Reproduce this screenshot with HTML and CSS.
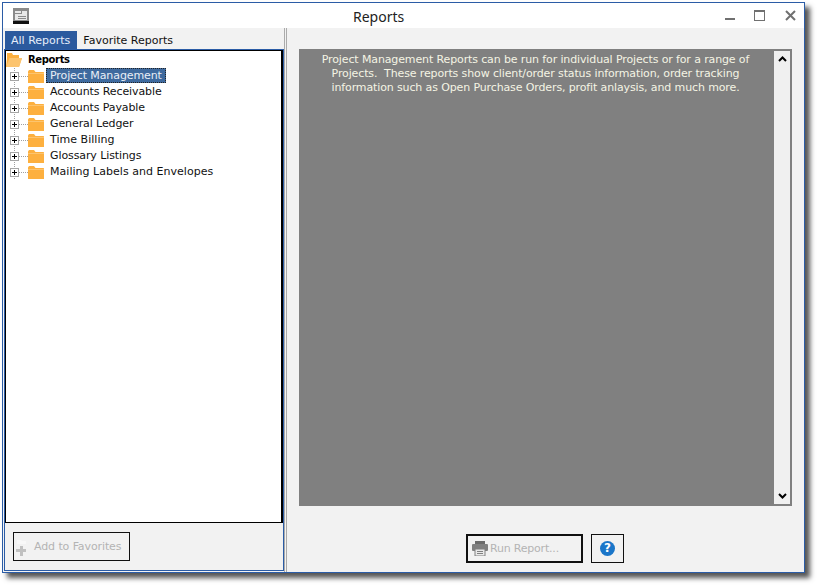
FILE: index.html
```html
<!DOCTYPE html>
<html lang="en">
<head>
<meta charset="utf-8">
<title>Reports</title>
<link rel="stylesheet" href="styles.css">
</head>
<body>
<svg class="defs" width="0" height="0" aria-hidden="true">
  <defs>
    <symbol id="folder" viewBox="0 0 16 14">
      <path d="M0 2.5 1 1h5l1.5 2H15.5l.5.5V14H0z" fill="#fdb03f"/>
      <path d="M0 4h16v1H0z" fill="#fcc46f"/>
    </symbol>
    <symbol id="expander" viewBox="0 0 20 16">
      <path d="M6.5 0v16" stroke="#a0a0a0" stroke-dasharray="1 1" fill="none"/>
      <path d="M11 8.5h9" stroke="#a0a0a0" stroke-dasharray="1 1" fill="none"/>
      <rect x="2.5" y="4.5" width="8" height="8" fill="#fff" stroke="#a6a6a6"/>
      <path d="M4 8.5h5M6.5 6v5" stroke="#000" fill="none"/>
    </symbol>
  </defs>
</svg>
<div class="window">
  <header class="titlebar">
    <svg class="app-icon" width="16" height="16" viewBox="0 0 16 16">
      <rect width="16" height="16" fill="#8a8a8a"/>
      <rect y="13" width="16" height="3" fill="#111"/>
      <rect x="2" y="3" width="12" height="9" fill="#e8e8e8"/>
      <path d="M2 5.500h6M8.500 3v3M5 8.500h8M5 10.500h8" stroke="#8a8a8a" fill="none"/>
    </svg>
    <h1 class="title">Reports</h1>
    <div class="controls">
      <svg class="ctl-min" width="10" height="3" viewBox="0 0 10 3"><rect width="10" height="2" y="1" fill="#707070"/></svg>
      <svg class="ctl-max" width="11" height="11" viewBox="0 0 11 11"><rect x=".5" y=".5" width="10" height="10" fill="none" stroke="#707070"/><rect x="0" y="0" width="11" height="2" fill="#707070"/></svg>
      <svg class="ctl-close" width="11" height="11" viewBox="0 0 11 11"><path d="M1 1l9 9M10 1l-9 9" stroke="#707070" stroke-width="2" fill="none"/></svg>
    </div>
  </header>
  <main class="content">
    <section class="left">
      <nav class="tabs">
        <span class="tab active">All Reports</span>
        <span class="tab">Favorite Reports</span>
      </nav>
      <div class="panel">
        <div class="tree">
          <div class="root">
            <svg class="root-folder" width="16" height="14" viewBox="0 0 16 14"><path d="M1 0h5l1 2h6v3h3l-3 9H0L1 5z" fill="#fdb03f"/><path d="M3.500 5H16l-3 9H0z" fill="#fcc46f"/></svg>
            <span class="root-label">Reports</span>
          </div>
          <div class="row"><svg class="exp"><use href="#expander"/></svg><svg class="fld"><use href="#folder"/></svg><span class="label selected">Project Management</span></div>
          <div class="row"><svg class="exp"><use href="#expander"/></svg><svg class="fld"><use href="#folder"/></svg><span class="label">Accounts Receivable</span></div>
          <div class="row"><svg class="exp"><use href="#expander"/></svg><svg class="fld"><use href="#folder"/></svg><span class="label">Accounts Payable</span></div>
          <div class="row"><svg class="exp"><use href="#expander"/></svg><svg class="fld"><use href="#folder"/></svg><span class="label">General Ledger</span></div>
          <div class="row"><svg class="exp"><use href="#expander"/></svg><svg class="fld"><use href="#folder"/></svg><span class="label wide">Time Billing</span></div>
          <div class="row"><svg class="exp"><use href="#expander"/></svg><svg class="fld"><use href="#folder"/></svg><span class="label">Glossary Listings</span></div>
          <div class="row"><svg class="exp"><use href="#expander"/></svg><svg class="fld"><use href="#folder"/></svg><span class="label wide">Mailing Labels and Envelopes</span></div>
        </div>
        <div class="left-foot">
          <button class="btn btn-add" type="button" disabled>
            <svg width="11" height="17" viewBox="0 0 11 17"><path d="M1 1h4l1 1h4v3H1z" fill="#f8f8f8"/><path d="M4 7h3v3h3v3H7v4H4v-4H0v-3h4z" fill="#c0c0c0"/></svg>
            <span>Add to Favorites</span>
          </button>
        </div>
      </div>
    </section>
    <div class="splitter"></div>
    <section class="right">
      <div class="desc">
        <p class="desc-text">Project Management Reports can be run for individual Projects or for a range of<br>Projects.&nbsp; These reports show client/order status information, order tracking<br>information such as Open Purchase Orders, profit anlaysis, and much more.</p>
        <div class="scrollbar">
          <svg width="9" height="6" viewBox="0 0 9 6"><path d="M1 5l3.500-3.500L8 5" stroke="#000" stroke-width="2" fill="none"/></svg>
          <svg width="9" height="6" viewBox="0 0 9 6"><path d="M1 1l3.500 3.500L8 1" stroke="#000" stroke-width="2" fill="none"/></svg>
        </div>
      </div>
      <div class="actions">
        <button class="btn btn-run" type="button" disabled>
          <svg width="16" height="15" viewBox="0 0 16 15"><path d="M3 0h10v3H3z" fill="#6b6b6b"/><rect y="3" width="16" height="7" rx="1" fill="#808080"/><path d="M3 8h10v7H3z" fill="#e9e9e9" stroke="#808080"/><path d="M5 10.500h6M5 12.500h6" stroke="#808080"/></svg>
          <span>Run Report...</span>
        </button>
        <button class="btn btn-help" type="button" aria-label="Help"><span class="help-dot">?</span></button>
      </div>
    </section>
  </main>
</div>
</body>
</html>
```

FILE: styles.css
```css
html, body {
  margin: 0;
  padding: 0;
  background: #fff;
  height: 100%;
  overflow: hidden;
}

body {
  padding: 2px 0 0 2px;
  font-family: "DejaVu Sans", sans-serif;
  font-size: 11px;
  box-sizing: border-box;
}

.defs {
  position: absolute;
}

.window {
  box-sizing: border-box;
  width: 803px;
  height: 571px;
  border: 1px solid #2b5ca6;
  display: flex;
  flex-direction: column;
  background: #f2f2f2;
  box-shadow: 5px 5px 5px #555;
}

.titlebar {
  height: 25px;
  flex: none;
  background: #fff;
  display: flex;
  align-items: center;
  padding: 0 8px 0 10px;
  position: relative;
}

.app-icon {
  margin-top: 1px;
}

.title {
  position: absolute;
  left: 350px;
  top: 5px;
  margin: 0;
  font: 400 14px/18px "Noto Sans", sans-serif;
  color: #222;
}

.controls {
  margin-left: auto;
  display: flex;
  align-items: center;
}

.ctl-min { margin: 5px 19px 0 0; }
.ctl-max { margin: 0 20px 0 0; }
.ctl-close { margin: 0; }

.content {
  flex: 1;
  display: flex;
  min-height: 0;
}

.left {
  width: 280px;
  margin-left: 1px;
  flex: none;
  display: flex;
  flex-direction: column;
  padding-top: 3px;
  padding-bottom: 1px;
  box-sizing: border-box;
}

.tabs {
  display: flex;
  height: 18px;
  padding-left: 1px;
  flex: none;
}

.tab {
  padding: 0 6px;
  line-height: 19px;
  color: #111;
}

.tab.active {
  background: #2b5a9e;
  color: #e6eefa;
  padding-right: 7px;
}

.panel {
  flex: 1;
  border: 1px solid #2b5ca6;
  display: flex;
  flex-direction: column;
  min-height: 0;
}

.tree {
  height: 473px;
  box-sizing: border-box;
  flex: none;
  background: #fff;
  border: 1px solid #000;
  border-right-width: 2px;
}

.root {
  display: flex;
  align-items: center;
  height: 17px;
  gap: 6px;
}

.root-label {
  font-weight: 700;
  font-size: 10px;
  letter-spacing: -.35px;
  color: #000;
}

.row {
  display: flex;
  align-items: flex-start;
  height: 16px;
  padding-left: 2px;
}

.exp {
  width: 20px;
  height: 16px;
  flex: none;
}

.fld {
  width: 16px;
  height: 14px;
  flex: none;
  margin-top: 1px;
}

.label {
  margin-left: 2px;
  padding: 0 3px;
  height: 13px;
  line-height: 13px;
  border: 1px solid transparent;
  color: #111;
  letter-spacing: -.1px;
  white-space: nowrap;
}

.label.wide {
  letter-spacing: .03px;
}

.label.selected {
  background: #3e6a9e;
  color: #e8eef6;
  border: 1px dotted #222;
}

.left-foot {
  flex: 1;
  padding: 9px 0 0 8px;
}

.btn {
  font: inherit;
  background: transparent;
  box-sizing: border-box;
  display: flex;
  align-items: center;
  padding: 0;
  margin: 0;
}

.btn-add {
  width: 117px;
  height: 29px;
  border: 1px solid #111;
  padding-left: 2px;
  gap: 7px;
  color: #b4b4b4;
  letter-spacing: -.1px;
}

.btn-add svg {
  margin-top: 2px;
}

.splitter {
  width: 3px;
  flex: none;
  box-sizing: border-box;
  border-left: 1px solid #ababab;
  border-right: 1px solid #ababab;
}

.right {
  flex: 1;
  display: flex;
  flex-direction: column;
  padding: 21px 12px 0;
  min-width: 0;
}

.desc {
  height: 457px;
  flex: none;
  background: #808080;
  display: flex;
}

.desc-text {
  flex: 1;
  margin: 0;
  padding: 4px 2px 0 0;
  text-align: center;
  color: #f4f4e4;
  line-height: 14px;
  letter-spacing: -.125px;
  white-space: nowrap;
}

.scrollbar {
  width: 16px;
  margin: 2px 2px 2px 0;
  background: #f0f0f0;
  display: flex;
  flex-direction: column;
  justify-content: space-between;
  align-items: center;
  padding: 5px 0;
  box-sizing: border-box;
}

.actions {
  display: flex;
  justify-content: flex-start;
  padding: 28px 0 0 167px;
  gap: 8px;
}

.btn-run {
  width: 117px;
  height: 29px;
  border: 2px solid #111;
  padding-left: 4px;
  gap: 2px;
  color: #b4b4b4;
  letter-spacing: -.2px;
}

.btn-help {
  width: 33px;
  height: 29px;
  border: 1px solid #111;
  justify-content: center;
}

.help-dot {
  width: 15px;
  height: 15px;
  border-radius: 50%;
  background: #1b76c9;
  color: #fff;
  font-weight: 700;
  font-size: 12px;
  line-height: 15px;
  text-align: center;
}
```
